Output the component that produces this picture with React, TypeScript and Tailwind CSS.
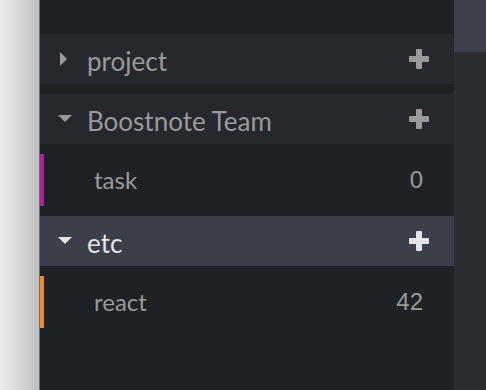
import React from 'react';

type Tag = { name: string; count: number; color: string };
type Group = { name: string; open: boolean; active?: boolean; tags: Tag[] };

const groups: Group[] = [
  { name: 'project', open: false, tags: [] },
  { name: 'Boostnote Team', open: true, tags: [{ name: 'task', count: 0, color: '#b01ea6' }] },
  { name: 'etc', open: true, active: true, tags: [{ name: 'react', count: 42, color: '#f0892a' }] },
];

function Caret({ open }: { open: boolean }) {
  return open ? (
    <svg width="14" height="8" viewBox="0 0 14 8" className="block">
      <path d="M0 0 L14 0 L7 7 Z" fill="currentColor" />
    </svg>
  ) : (
    <svg width="8" height="14" viewBox="0 0 8 14" className="block">
      <path d="M0 0 L7 7 L0 14 Z" fill="currentColor" />
    </svg>
  );
}

function Plus() {
  return (
    <svg width="20" height="20" viewBox="0 0 20 20" className="block">
      <rect x="7" y="0" width="6" height="20" rx="1" fill="currentColor" />
      <rect x="0" y="7" width="20" height="6" rx="1" fill="currentColor" />
    </svg>
  );
}

export default function App() {
  return (
    <div className="flex h-[390px] w-[486px] overflow-hidden font-['Lato',sans-serif]">
      <div className="w-[40px] border-r border-[#6f6f6f] bg-gradient-to-r from-[#ededed] to-[#c0c0c0]" />

      <div className="flex-1 bg-[#1f2225] pt-[34px]">
        {groups.map((g) => (
          <div key={g.name} className="mb-[10px]">
            <div
              className={`flex h-[50px] items-center pl-[20px] pr-[25px] ${
                g.active ? 'bg-[#3a3f4b] text-[#e4e4e4]' : 'bg-[#25282c] text-[#999a9c]'
              }`}
            >
              <div className="flex w-[27px] justify-start">
                <span className={g.open ? '-ml-[2px]' : ''}>
                  <Caret open={g.open} />
                </span>
              </div>
              <span className="flex-1 pt-[3px] text-[26px] leading-none">{g.name}</span>
              <Plus />
            </div>
            {g.tags.map((t) => (
              <div key={t.name} className="relative mt-[10px] flex h-[52px] items-center pl-[54px] pr-[31px] text-[#999a9c]">
                <div className="absolute left-0 top-0 h-full w-[4px]" style={{ backgroundColor: t.color }} />
                <span className="flex-1 text-[24px] leading-none">{t.name}</span>
                <span className="font-['Liberation_Sans',sans-serif] text-[24px] leading-none">{t.count}</span>
              </div>
            ))}
          </div>
        ))}
      </div>

      <div className="w-[32px] bg-[#2a2d32]">
        <div className="h-[52px] bg-[#3b404b]" />
      </div>
    </div>
  );
}
